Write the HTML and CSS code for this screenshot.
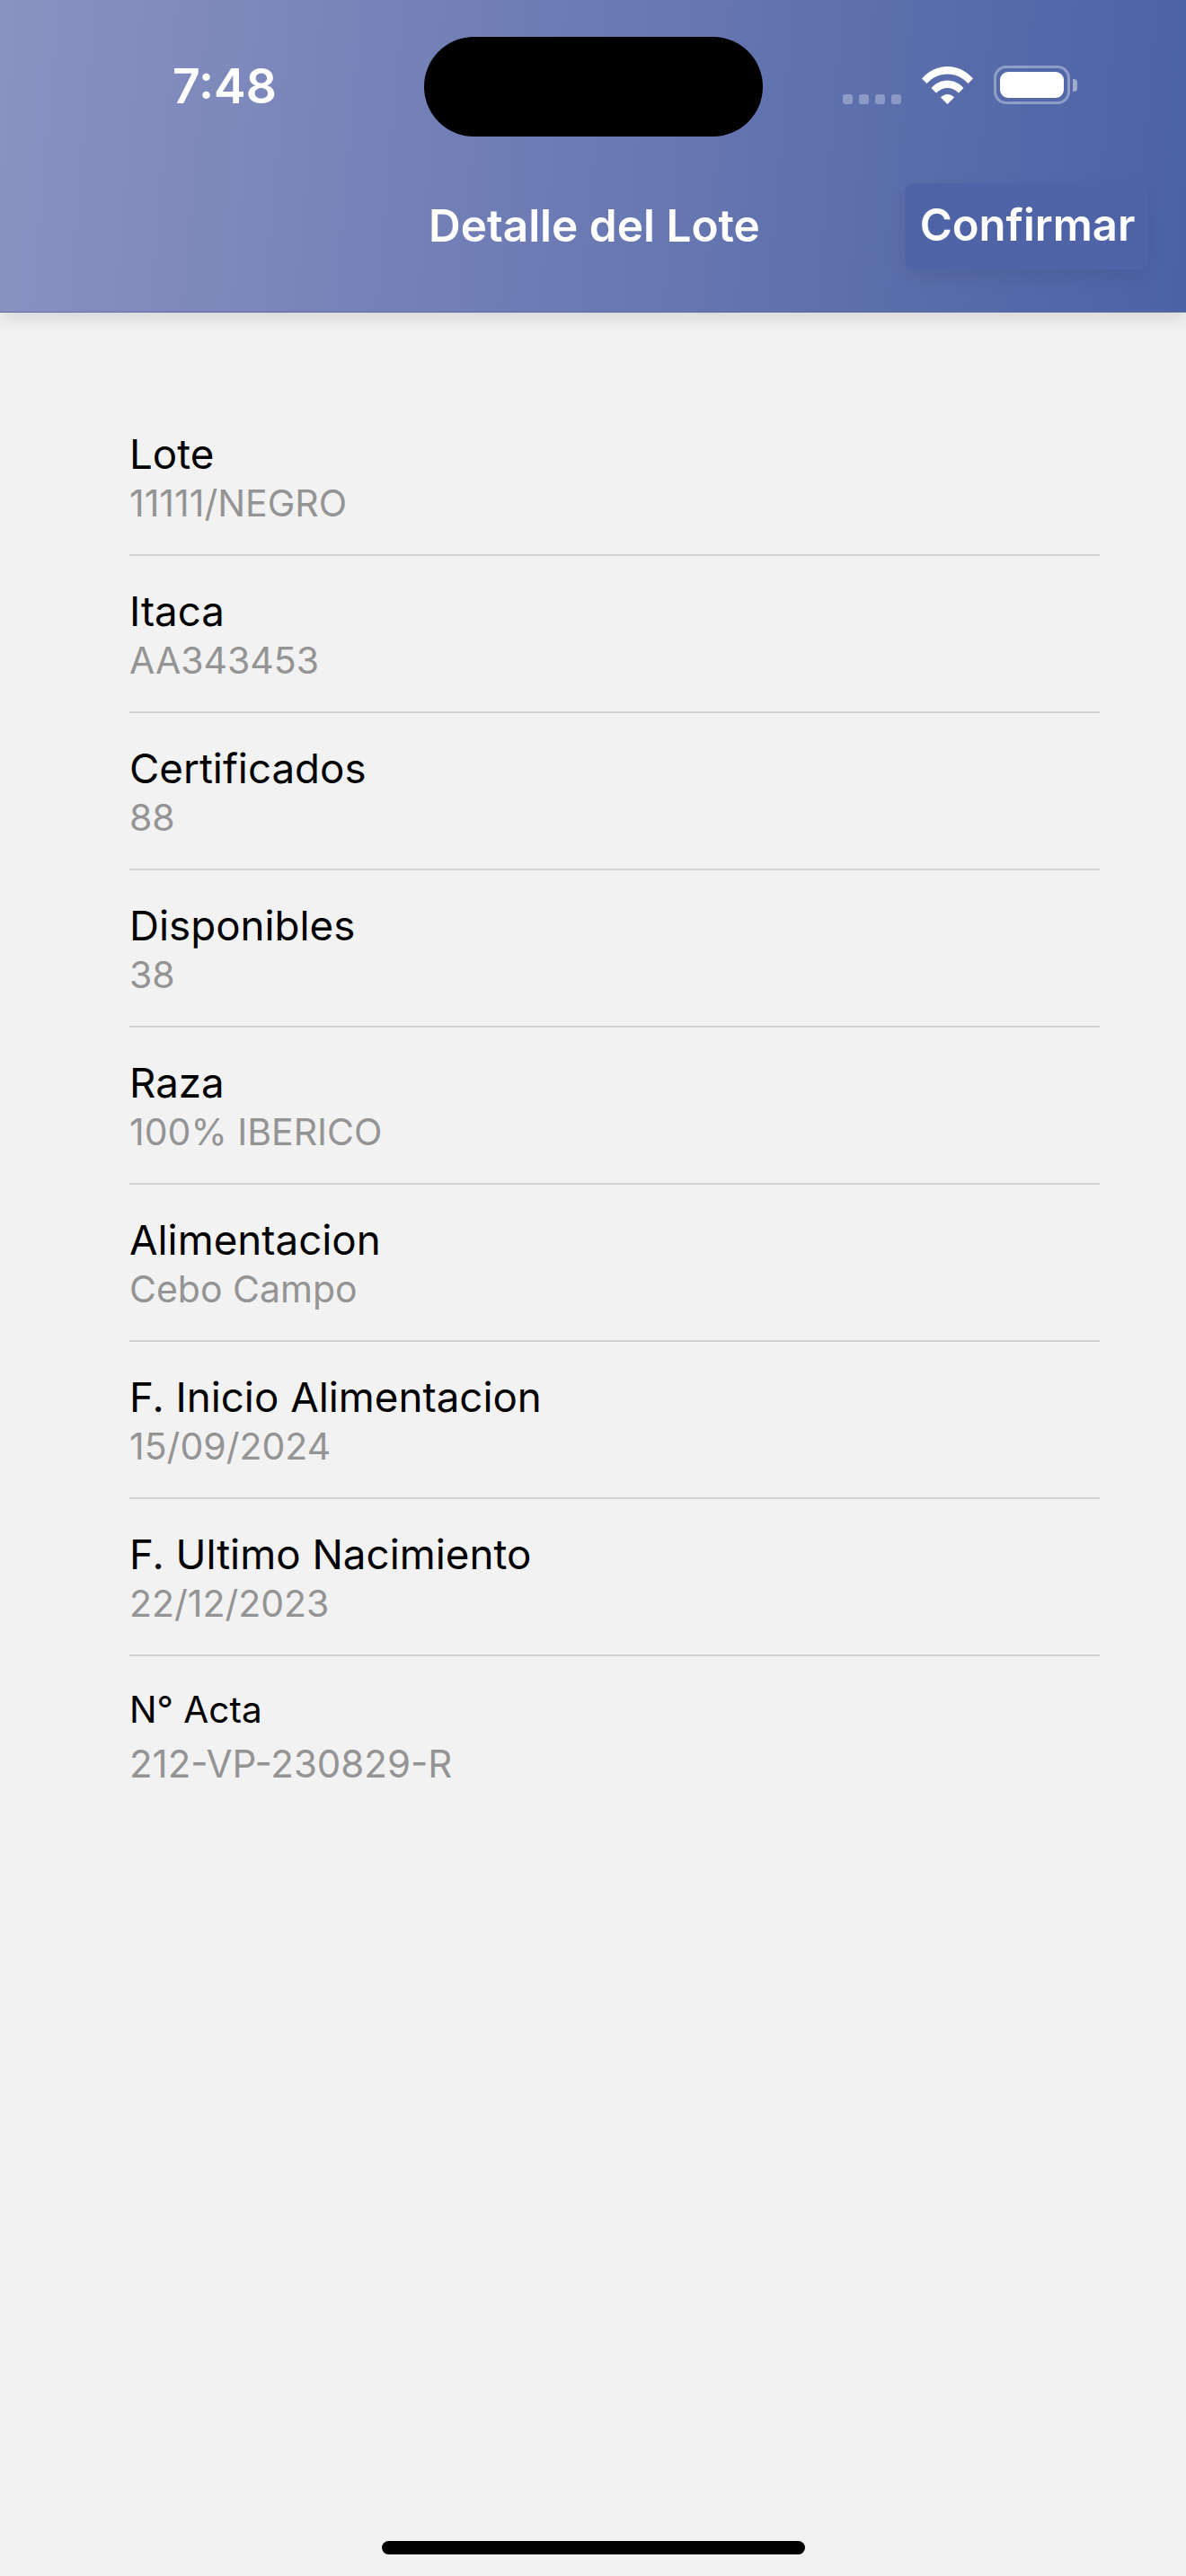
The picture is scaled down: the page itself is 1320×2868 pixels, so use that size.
FILE: index.html
```html
<!DOCTYPE html>
<html lang="es">
<head>
    <meta charset="UTF-8">
    <meta name="viewport" content="width=device-width, initial-scale=1.0">
    <title>Detalle del Lote</title>
    <link rel="stylesheet" href="styles.css">
</head>
<body>
    <header class="header">
        <div class="status-bar">
            <span class="time">7:48</span>
            <div class="island"></div>
            <div class="status-icons">
                <div class="signal-dots"><i></i><i></i><i></i><i></i></div>
                <svg class="wifi" viewBox="0 0 57 42" width="57" height="42">
                    <path d="M0 13.500C7.500 5 17.500 0 28.500 0S49.500 5 57 13.500L51.500 19C45.500 12.500 37.500 8.500 28.500 8.500S11.500 12.500 5.500 19Z" fill="#fff"/>
                    <path d="M10.500 24C15 19 21.500 15.500 28.500 15.500S42 19 46.500 24L41 29.500C37.500 26 33.500 24 28.500 24S19.500 26 16 29.500Z" fill="#fff"/>
                    <path d="M21 34.500C23 32.500 25.500 31 28.500 31S34 32.500 36 34.500L28.500 42Z" fill="#fff"/>
                </svg>
                <div class="battery">
                    <div class="battery-body"><div class="battery-fill"></div></div>
                    <div class="battery-tip"></div>
                </div>
            </div>
        </div>
        <div class="nav-bar">
            <h1 class="nav-title">Detalle del Lote</h1>
            <button class="confirm-btn">Confirmar</button>
        </div>
    </header>

    <main class="detail-list">
        <div class="detail-row">
            <div class="detail-label">Lote</div>
            <div class="detail-value">11111/NEGRO</div>
        </div>
        <div class="detail-row">
            <div class="detail-label">Itaca</div>
            <div class="detail-value">AA343453</div>
        </div>
        <div class="detail-row">
            <div class="detail-label">Certificados</div>
            <div class="detail-value">88</div>
        </div>
        <div class="detail-row">
            <div class="detail-label">Disponibles</div>
            <div class="detail-value">38</div>
        </div>
        <div class="detail-row">
            <div class="detail-label">Raza</div>
            <div class="detail-value">100% IBERICO</div>
        </div>
        <div class="detail-row">
            <div class="detail-label">Alimentacion</div>
            <div class="detail-value">Cebo Campo</div>
        </div>
        <div class="detail-row">
            <div class="detail-label">F. Inicio Alimentacion</div>
            <div class="detail-value">15/09/2024</div>
        </div>
        <div class="detail-row">
            <div class="detail-label">F. Ultimo Nacimiento</div>
            <div class="detail-value">22/12/2023</div>
        </div>
        <div class="detail-row detail-row-last">
            <div class="detail-label">N° Acta</div>
            <div class="detail-value">212-VP-230829-R</div>
        </div>
    </main>

    <div class="home-bar"></div>
</body>
</html>
```

FILE: styles.css
```css
html, body {
    height: 100%;
}
body {
    font-family: 'Inter', 'Liberation Sans', sans-serif;
    margin: 0;
    background-color: #f2f2f2;
    display: flex;
    flex-direction: column;
    overflow: hidden;
}
.header {
    position: relative;
    height: 347px;
    flex-shrink: 0;
    background: linear-gradient(95deg, #8a92c1 0%, #4b62a5 100%);
    border-bottom: 1px solid #5a6a9f;
    box-shadow: 0 6px 18px rgba(0, 0, 0, 0.12);
    color: #fff;
}
.status-bar {
    height: 192px;
    display: flex;
    align-items: flex-start;
    position: relative;
}
.time {
    margin: 62px 0 0 192px;
    font-size: 53.5px;
    line-height: 68px;
    font-weight: 600;
}
.island {
    position: absolute;
    left: 472px;
    top: 41px;
    width: 377px;
    height: 111px;
    border-radius: 56px;
    background-color: #000;
}
.status-icons {
    margin: 73px 0 0 auto;
    padding-right: 121px;
    display: flex;
    align-items: flex-end;
    gap: 23px;
}
.signal-dots {
    display: flex;
    gap: 7px;
}
.signal-dots i {
    display: block;
    width: 11px;
    height: 11px;
    border-radius: 3px;
    background-color: rgba(255, 255, 255, 0.3);
}
.wifi {
    display: block;
}
.battery {
    display: flex;
    align-items: center;
    gap: 3px;
}
.battery-body {
    width: 85px;
    height: 43px;
    box-sizing: border-box;
    padding: 4px;
    border: 3px solid rgba(255, 255, 255, 0.35);
    border-radius: 14px;
}
.battery-fill {
    height: 100%;
    background-color: #fff;
    border-radius: 9px;
}
.battery-tip {
    width: 5px;
    height: 14px;
    border-radius: 0 4px 4px 0;
    background-color: rgba(255, 255, 255, 0.45);
}
.nav-bar {
    position: relative;
    height: 96px;
    margin-top: 12px;
    display: flex;
    align-items: center;
    justify-content: flex-end;
    padding-right: 42px;
}
.nav-title {
    position: absolute;
    left: 477px;
    top: 0;
    margin: 0;
    font-size: 49.5px;
    line-height: 94px;
    font-weight: 600;
    white-space: nowrap;
}
.confirm-btn {
    width: 271px;
    height: 96px;
    border: none;
    border-radius: 11px;
    background-color: #4e64a6;
    box-shadow: 0 8px 20px rgba(0, 0, 0, 0.08);
    color: #fff;
    font-family: inherit;
    font-size: 49px;
    line-height: 94px;
    font-weight: 600;
    padding: 0 0 4px 2px;
}
.detail-list {
    margin: 0 96px 0 144px;
    padding-top: 96px;
}
.detail-row {
    height: 175px;
    box-sizing: border-box;
    border-bottom: 2px solid #d2d2d2;
    padding-top: 34px;
}
.detail-row-last {
    border-bottom: none;
}
.detail-label {
    font-size: 45.7px;
    line-height: 56px;
    color: #000;
}
.detail-value {
    font-size: 41px;
    line-height: 52px;
    color: #949494;
}
.detail-row-last .detail-label {
    font-size: 40.5px;
    line-height: 52px;
}
.detail-row-last .detail-value {
    margin-top: 8px;
    font-size: 42px;
}
.home-bar {
    position: absolute;
    left: 425px;
    top: 2829px;
    width: 471px;
    height: 15px;
    border-radius: 8px;
    background-color: #000;
}
```
